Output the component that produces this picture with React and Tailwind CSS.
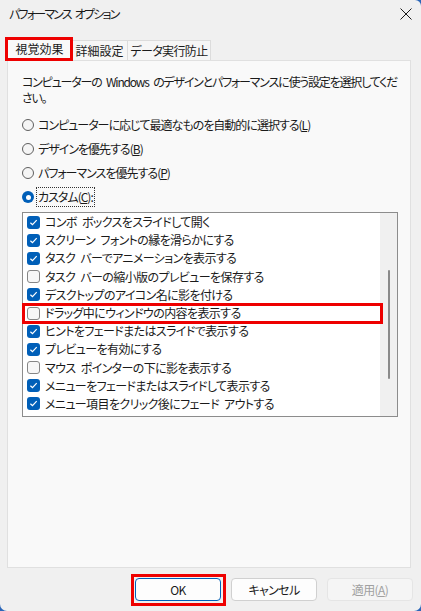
import React from "react";

const items = [
  ["コンボ ボックスをスライドして開く", true],
  ["スクリーン フォントの縁を滑らかにする", true],
  ["タスク バーでアニメーションを表示する", true],
  ["タスク バーの縮小版のプレビューを保存する", false],
  ["デスクトップのアイコン名に影を付ける", true],
  ["ドラッグ中にウィンドウの内容を表示する", false],
  ["ヒントをフェードまたはスライドで表示する", true],
  ["プレビューを有効にする", true],
  ["マウス ポインターの下に影を表示する", false],
  ["メニューをフェードまたはスライドして表示する", true],
  ["メニュー項目をクリック後にフェード アウトする", true],
];

const Check = ({ on }) =>
  on ? (
    <span className="w-[13px] h-[13px] shrink-0 rounded-[3px] bg-[#005fb8] flex items-center justify-center">
      <svg width="9" height="9" viewBox="0 0 9 9">
        <path d="M1.4 4.7 L3.5 6.7 L7.7 2.2" fill="none" stroke="#fff" strokeWidth="1.2" />
      </svg>
    </span>
  ) : (
    <span className="w-[13px] h-[13px] shrink-0 rounded-[3px] border border-[#868686] bg-[#f7f7f7]" />
  );

const Radio = ({ on, children }) => (
  <div className="h-[24px] flex items-center gap-[4px]">
    {on ? (
      <span className="w-[12px] h-[12px] rounded-full bg-[#005fb8] flex items-center justify-center">
        <span className="w-[5px] h-[5px] rounded-full bg-white" />
      </span>
    ) : (
      <span className="w-[12px] h-[12px] rounded-full border border-[#5f5f5f] bg-[#f5f5f5]" />
    )}
    {children}
  </div>
);

const Btn = ({ children, primary, disabled }) => (
  <button
    className={
      primary
        ? "w-[86px] h-[23px] rounded-[4px] border border-[#005fb8] bg-[#fdfdfd] text-[#1a1a1a]"
        : disabled
        ? "w-[86px] h-[23px] rounded-[4px] border border-[#e5e5e5] bg-[#f5f5f5] text-[#a0a0a0]"
        : "w-[86px] h-[23px] rounded-[4px] border border-[#d0d0d0] bg-[#fdfdfd] text-[#1a1a1a]"
    }
  >
    {children}
  </button>
);

export default function App() {
  return (
    <div className="w-[421px] h-[611px] bg-[#2b66b8] overflow-hidden">
      <div
        className="w-[421px] h-[611px] bg-[#f0f0f0] rounded-b-[7px] rounded-tr-[6px] text-[12px] leading-[16px] tracking-[-0.6px] [word-spacing:3px] text-[#1a1a1a] [font-feature-settings:'palt']"
        style={{ fontFamily: "'Noto Sans CJK JP', 'Noto Sans', sans-serif" }}
      >
        {/* Title bar */}
        <div className="h-[28px] flex items-center justify-between pl-[9px] pr-[9px]">
          <span className="tracking-[-1.8px]">パフォーマンス オプション</span>
          <svg width="12" height="12" viewBox="0 0 12 12">
            <path d="M0.5 0.5 L11.5 11.5 M11.5 0.5 L0.5 11.5" stroke="#1a1a1a" strokeWidth="1" />
          </svg>
        </div>

        {/* Tabs */}
        <div className="mt-[9px] ml-[7px] flex items-end h-[23px] tracking-normal">
          <div className="relative w-[65px] h-[23px] bg-[#f9f9f9] border-l border-t border-r border-[#dcdcdc] flex items-center justify-center">
            視覚効果
            <div className="absolute -left-[3px] -top-[1px] w-[68px] h-[24px] border-[3px] border-[#ee0000]" />
          </div>
          <div className="w-[56px] h-[20px] bg-[#f6f6f6] border-t border-r border-[#dcdcdc] flex items-center justify-center">
            詳細設定
          </div>
          <div className="w-[83px] h-[20px] bg-[#f6f6f6] border-t border-r border-[#dcdcdc] flex items-center justify-center tracking-[-0.6px]">
            データ実行防止
          </div>
        </div>

        {/* Panel */}
        <div className="ml-[7px] w-[404px] h-[508px] bg-[#f9f9f9] border border-[#e0e0e0] pl-[14px] pt-[13px]">
          <p className="whitespace-nowrap tracking-[-1.2px]">
            コンピューターの Windows のデザインとパフォーマンスに使う設定を選択してくだ
            <br />
            さい。
          </p>

          <div className="mt-[7px] tracking-[-1px]">
            <Radio>
              <span>
                コンピューターに応じて最適なものを自動的に選択する(<span className="underline">L</span>)
              </span>
            </Radio>
            <Radio>
              <span>
                デザインを優先する(<span className="underline">B</span>)
              </span>
            </Radio>
            <Radio>
              <span>
                パフォーマンスを優先する(<span className="underline">P</span>)
              </span>
            </Radio>
            <Radio on>
              <span className="outline outline-1 outline-dotted outline-[#333] px-[1px] py-[1px] -ml-[1px]">
                カスタム(<span className="underline">C</span>):
              </span>
            </Radio>
          </div>

          {/* List */}
          <div className="relative mt-[3px] w-[376px] h-[205px] bg-white border border-[#8c8c8c] flex">
            <div className="flex-1 pl-[4px]">
              {items.map(([label, on]) => (
                <div key={label} className="h-[18.2px] flex items-center gap-[5px] whitespace-nowrap">
                  <Check on={on} />
                  <span>{label}</span>
                </div>
              ))}
            </div>
            <div className="w-[17px] h-full bg-[#f0f0f0] flex justify-center pt-[57px]">
              <div className="w-[2px] h-[109px] rounded-full bg-[#8a8a8a]" />
            </div>
            <div className="absolute -left-[1px] top-[90px] w-[361px] h-[21px] border-[3px] border-[#ee0000]" />
          </div>
        </div>

        {/* Buttons */}
        <div className="mt-[10px] flex justify-end gap-[10px] pr-[8px]">
          <div className="relative">
            <Btn primary>OK</Btn>
            <div className="absolute -left-[4px] -top-[4px] w-[95px] h-[32px] border-[3px] border-[#ee0000]" />
          </div>
          <Btn>キャンセル</Btn>
          <Btn disabled>
            適用(<span className="underline">A</span>)
          </Btn>
        </div>
      </div>
    </div>
  );
}
